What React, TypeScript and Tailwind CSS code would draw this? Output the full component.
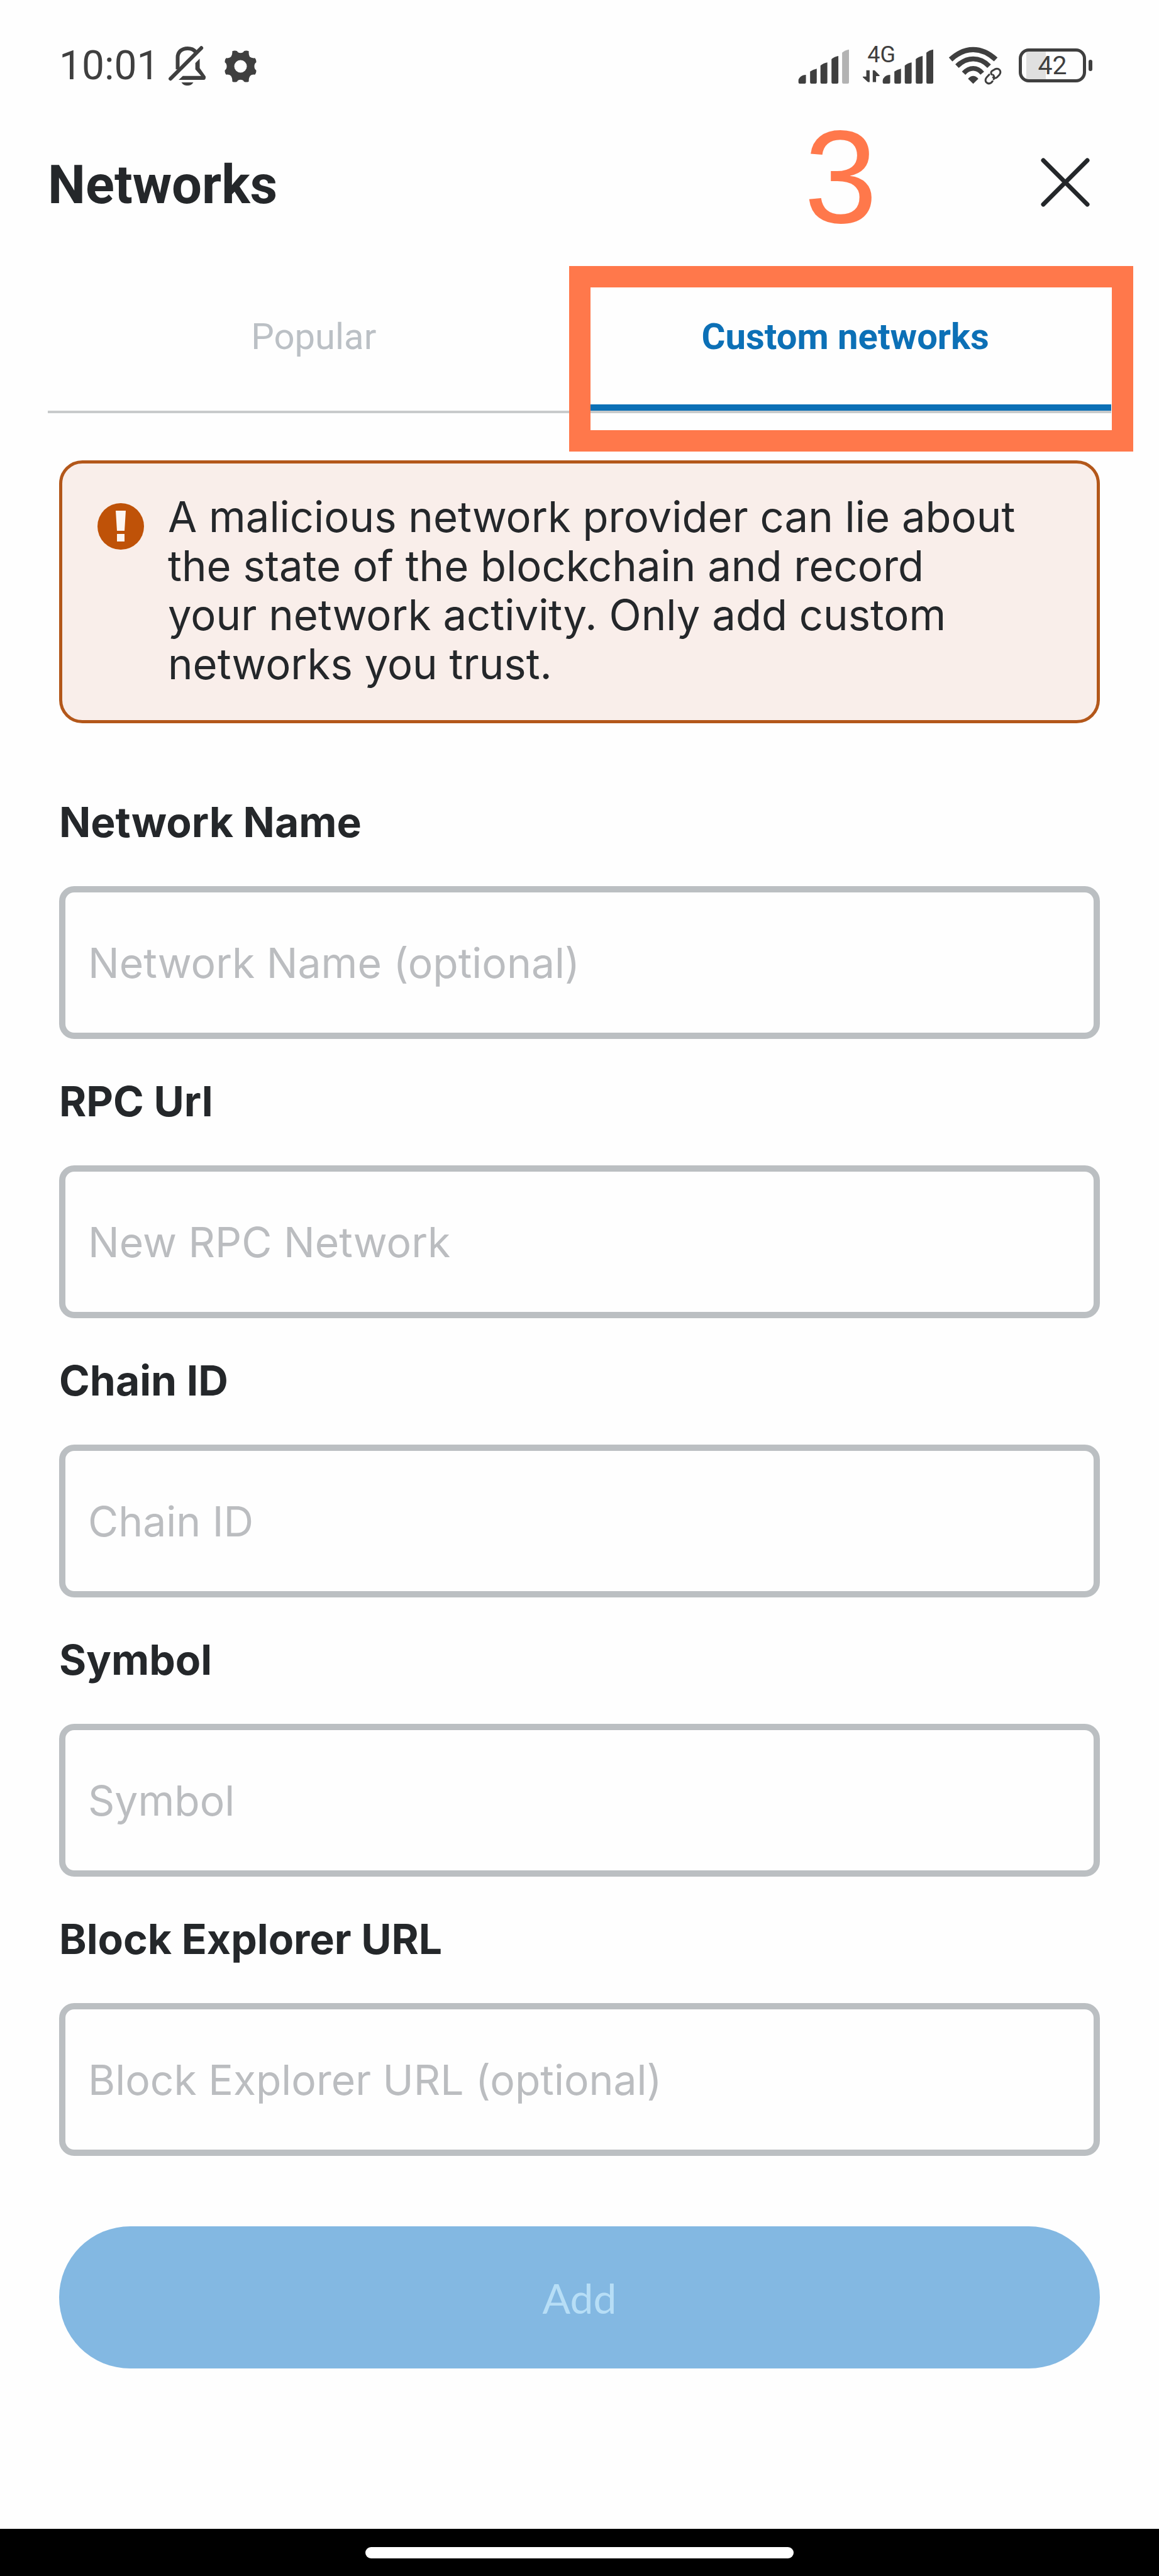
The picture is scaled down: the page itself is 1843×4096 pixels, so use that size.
import { useState } from "react";

const FIELDS = [
  { id: "network-name", label: "Network Name", placeholder: "Network Name (optional)" },
  { id: "rpc-url", label: "RPC Url", placeholder: "New RPC Network" },
  { id: "chain-id", label: "Chain ID", placeholder: "Chain ID" },
  { id: "symbol", label: "Symbol", placeholder: "Symbol" },
  { id: "block-explorer", label: "Block Explorer URL", placeholder: "Block Explorer URL (optional)" },
];

const BARS = [
  "M2 27Q2 18 12 9Q22 0 38 0V36Q38 42 32 42H8Q2 42 2 36Z",
  "M58 -16Q72 -27 90 -30V36Q90 42 84 42H64Q58 42 58 36Z",
  "M108 -45Q122 -57 141 -60V36Q141 42 135 42H114Q108 42 108 36Z",
  "M161 -76Q175 -88 194 -91V36Q194 42 188 42H167Q161 42 161 36Z",
  "M212 -107Q226 -119 245 -122V36Q245 42 239 42H218Q212 42 212 36Z",
];

function Signal({ level }: { level: number }) {
  return (
    <svg width="82" height="55" viewBox="0 -124 248 166" aria-hidden="true">
      {BARS.map((d, i) => (
        <path key={d} d={d} fill={i < level ? "#3f3f3f" : "#b3b3b3"} />
      ))}
    </svg>
  );
}

function BellOff() {
  return (
    <svg width="60" height="64" viewBox="655 103 190 200" fill="none" stroke="#3f3f3f" strokeWidth="19" aria-hidden="true">
      <path d="M701 220V160C701 132 722 114 751 114C769 114 783 121 791 131" />
      <path d="M665 267L820 112" strokeLinecap="round" />
      <path d="M706 273L727 253H819L790 220V188L812 166V213L842 256Q843 273 832 273Z" fill="#3f3f3f" stroke="none" />
      <path d="M720 285H780C772 297 763 301 750 301C737 301 728 297 720 285Z" fill="#3f3f3f" stroke="none" />
    </svg>
  );
}

function Gear() {
  return (
    <svg width="51" height="51" viewBox="0 0 158 158" aria-hidden="true">
      <path
        fill="#3f3f3f"
        fillRule="evenodd"
        d="M38 5Q50 -2 62 4Q66 13 79 13Q92 13 96 4Q108 -2 120 5Q118 20 124 32Q134 40 150 38Q158 48 156 60Q147 66 147 79Q147 92 156 98Q158 110 150 120Q134 118 126 126Q118 138 120 153Q108 160 96 154Q92 145 79 145Q66 145 62 154Q50 160 38 153Q40 138 32 126Q24 118 8 120Q0 110 2 98Q11 92 11 79Q11 66 2 60Q0 48 8 38Q24 40 32 32Q40 20 38 5ZM79 48A31 31 0 1 0 79 110A31 31 0 1 0 79 48Z"
      />
    </svg>
  );
}

function Wifi() {
  return (
    <svg width="85" height="61" viewBox="787 112 258 184" fill="none" stroke="#3f3f3f" aria-hidden="true">
      <path d="M798 174Q850 126 907 126Q965 126 1016 174" strokeWidth="25" />
      <path d="M829 206Q865 171 907 171Q950 171 984 206" strokeWidth="24" />
      <path d="M861 240Q882 217 907 217Q932 217 951 240" strokeWidth="23" />
      <path d="M882 267Q907 240 932 267L907 291Z" fill="#3f3f3f" stroke="none" />
      <g strokeWidth="9" strokeLinecap="round" strokeLinejoin="round">
        <path d="M996 246Q990 237 997 230L1010 222Q1025 214 1034 224Q1043 234 1034 247L1023 259Q1012 268 1003 260" />
        <path d="M984 247L972 260Q962 273 970 284Q980 295 994 286L1000 279M1003 248Q1013 258 1006 269" />
      </g>
    </svg>
  );
}

function DataArrows() {
  return (
    <svg width="27" height="20" viewBox="374 220 82 60" fill="#3f3f3f" aria-hidden="true">
      <path d="M391 222H407V279H399L374 256V252H391Z" />
      <path d="M422 279V222H431L455 246V250H438V279Z" />
    </svg>
  );
}

function StatusBar() {
  return (
    <header className="flex h-[210px] items-start justify-between pt-[68px] pr-[106px] pl-[94px] font-[Roboto,sans-serif] text-[#3f3f3f]">
      <div className="flex items-center pt-[4px]">
        <time className="w-[174px] text-[64px] leading-[66px]">10:01</time>
        <BellOff />
        <div className="ml-[29px]">
          <Gear />
        </div>
      </div>
      <div className="flex items-end">
        <div className="mb-[2px]">
          <Signal level={4} />
        </div>
        <div className="mb-[4px] ml-[21px] flex flex-col items-start gap-[5px]">
          <span className="ml-[7px] text-[36px] leading-[38px]">4G</span>
          <DataArrows />
        </div>
        <div className="mb-[2px] -ml-[21px]">
          <Signal level={5} />
        </div>
        <div className="ml-[23px]">
          <Wifi />
        </div>
        <div className="mb-[4px] ml-[27px] flex items-center gap-1">
          <div className="flex h-[54px] w-[107px] items-center justify-center rounded-[16px] border-[5px] border-[#3f3f3f] bg-[linear-gradient(90deg,transparent_7px,#e0e0e0_7px,#e0e0e0_38px,transparent_38px)] text-[41px] leading-none">
            42
          </div>
          <div className="h-[18px] w-[6px] rounded-sm bg-[#3f3f3f]" />
        </div>
      </div>
    </header>
  );
}

function Warning() {
  return (
    <div
      role="alert"
      className="flex items-start gap-[38px] rounded-[37px] border-[5px] border-[#b3571a] bg-[#f9eeea] px-[56px] pt-[46px] pb-[50px]"
    >
      <svg className="mt-[17px] shrink-0" width="74" height="74" viewBox="0 0 74 74" aria-hidden="true">
        <circle cx="37" cy="37" r="37" fill="#bf5208" />
        <path fill="#fdf6f2" d="M29 12H45L43 44H31ZM31 49H43V61H31Z" />
      </svg>
      <p className="text-[67px] leading-[78px] text-[#24272a]">
        A malicious network provider can lie about
        <br />
        the state of the blockchain and record
        <br />
        your network activity. Only add custom
        <br />
        networks you trust.
      </p>
    </div>
  );
}

export default function App() {
  const [values, setValues] = useState<Record<string, string>>({});

  return (
    <div className="flex min-h-screen flex-col bg-[#fefefe] font-[Inter,sans-serif] text-[#24272a]">
      <StatusBar />

      {/* Title */}
      <div className="flex h-[213px] items-start justify-between pr-[109px] pl-[76px] font-[Roboto,sans-serif]">
        <h1 className="mt-[34px] text-[85px] leading-[100px] font-bold">Networks</h1>
        <div className="flex items-start">
          <span className="mr-[259px] font-['Liberation_Sans',sans-serif] text-[209px] leading-[144px] text-[#ff784b]">
            3
          </span>
          <button type="button" aria-label="Close" className="mt-[40px]">
            <svg width="80" height="80" viewBox="0 0 80 80" stroke="#24272a" strokeWidth="7" strokeLinecap="round">
              <path d="M5 5L75 75M75 5L5 75" />
            </svg>
          </button>
        </div>
      </div>

      {/* Tabs */}
      <div role="tablist" className="relative mx-[76px] flex h-[234px] border-b-4 border-[#c8cacb] font-[Roboto,sans-serif]">
        <button type="button" role="tab" aria-selected="false" className="flex-1 pb-[6px] text-[58px] text-[#bbc0c5]">
          Popular
        </button>
        <button
          type="button"
          role="tab"
          aria-selected="true"
          className="flex-1 border-b-[10px] border-[#0c70b6] pt-[4px] text-[58px] font-bold text-[#0c70b6]"
        >
          Custom networks
        </button>
        {/* Highlight frame around the active tab */}
        <div className="pointer-events-none absolute top-0 -right-[35px] -bottom-[65px] left-[829px] border-[34px] border-[#ff784b]" />
      </div>

      <form className="mx-[94px] mt-[75px] flex flex-1 flex-col" onSubmit={(e) => e.preventDefault()}>
        <Warning />

        <div className="mt-[117px] flex flex-col gap-[59px]">
          {FIELDS.map((field) => (
            <div key={field.id} className="flex flex-col gap-[62px]">
              <label htmlFor={field.id} className="text-[66px] leading-[80px] font-bold">
                {field.label}
              </label>
              <input
                id={field.id}
                type="text"
                placeholder={field.placeholder}
                value={values[field.id] ?? ""}
                onChange={(e) => setValues({ ...values, [field.id]: e.target.value })}
                className="h-[243px] w-full rounded-[24px] border-[10px] border-[#bbbfc2] px-[36px] text-[66px] placeholder:text-[#bbbdc0]"
              />
            </div>
          ))}
        </div>

        <button
          type="submit"
          className="mt-[112px] h-[226px] w-full rounded-full bg-[#83b8e2] font-[Lato,sans-serif] text-[66px] text-[#b7def6]"
        >
          Add
        </button>
      </form>

      <footer className="mt-auto flex h-[75px] items-start justify-center bg-black pt-[29px]">
        <div className="h-[18px] w-[37%] rounded-full bg-white" />
      </footer>
    </div>
  );
}
